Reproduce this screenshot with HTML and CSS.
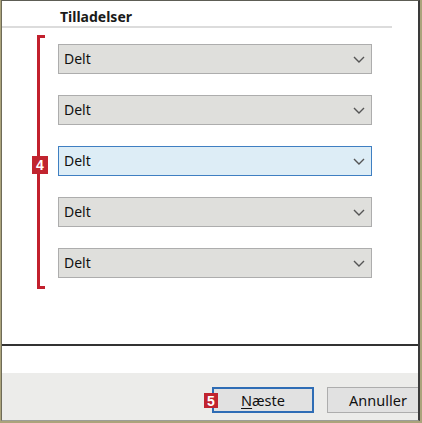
FILE: index.html
```html
<!DOCTYPE html>
<html lang="da">
<head>
<meta charset="utf-8">
<title>Tilladelser</title>
<link rel="stylesheet" href="styles.css">
</head>
<body>
<div class="window">
  <div class="panel">
    <div class="header">Tilladelser</div>
    <div class="annot">
      <div class="bracket"><span class="badge badge-4">4</span></div>
      <div class="list">
        <div class="select"><span>Delt</span><svg class="chev" width="12" height="7" viewBox="0 0 12 7"><polyline points="1,1 6,6 11,1" fill="none" stroke="#555" stroke-width="1.4"/></svg></div>
        <div class="select"><span>Delt</span><svg class="chev" width="12" height="7" viewBox="0 0 12 7"><polyline points="1,1 6,6 11,1" fill="none" stroke="#555" stroke-width="1.4"/></svg></div>
        <div class="select focus"><span>Delt</span><svg class="chev" width="12" height="7" viewBox="0 0 12 7"><polyline points="1,1 6,6 11,1" fill="none" stroke="#555" stroke-width="1.4"/></svg></div>
        <div class="select"><span>Delt</span><svg class="chev" width="12" height="7" viewBox="0 0 12 7"><polyline points="1,1 6,6 11,1" fill="none" stroke="#555" stroke-width="1.4"/></svg></div>
        <div class="select"><span>Delt</span><svg class="chev" width="12" height="7" viewBox="0 0 12 7"><polyline points="1,1 6,6 11,1" fill="none" stroke="#555" stroke-width="1.4"/></svg></div>
      </div>
    </div>
  </div>
  <div class="strip"></div>
  <div class="footer">
    <div class="btn primary"><span class="badge badge-5">5</span><span><u>N</u>æste</span></div>
    <div class="btn">Annuller</div>
  </div>
</div>
</body>
</html>
```
FILE: styles.css
```css
html, body {
  margin: 0;
  padding: 0;
}
body {
  background: #aba37b;
  width: 422px;
  height: 423px;
  overflow: hidden;
  font-family: "Noto Sans", "Open Sans", sans-serif;
  color: #111;
}
.window {
  margin-left: 1px;
  width: 419px;
  height: 421px;
  box-sizing: border-box;
  border-left: 1px solid #6e6b58;
  border-top: 1px solid #5d5d55;
  border-right: 2px solid #3a3a3a;
  border-bottom: 1px solid #9d9d98;
  background: #fff;
  display: flex;
  flex-direction: column;
  overflow: hidden;
}
.panel {
  height: 345px;
  flex: none;
  box-sizing: border-box;
  border-bottom: 2px solid #333;
  background: #fff;
}
.header {
  width: 390px;
  height: 27px;
  box-sizing: border-box;
  padding: 7px 0 0 58px;
  font-weight: bold;
  font-size: 14px;
  line-height: 18px;
  border-bottom: 2px solid #dcdcdc;
  color: #1a1a1a;
}
.annot {
  display: flex;
  margin-top: 7px;
  margin-left: 35px;
}
.bracket {
  position: relative;
  width: 8px;
  height: 254px;
  box-sizing: border-box;
  border-left: 3px solid #c2202d;
  border-top: 3px solid #c2202d;
  border-bottom: 3px solid #c2202d;
  flex: none;
}
.badge {
  position: absolute;
  background: #c1242f;
  color: #fff;
  font-weight: bold;
  display: flex;
  align-items: center;
  justify-content: center;
  font-family: "Liberation Sans", Arial, sans-serif;
}
.badge-4 {
  left: -8px;
  top: 118px;
  width: 16px;
  height: 18px;
  font-size: 14px;
}
.list {
  margin-left: 13px;
  padding-top: 9px;
  display: flex;
  flex-direction: column;
  gap: 21px;
}
.select {
  width: 314px;
  height: 30px;
  box-sizing: border-box;
  border: 1px solid #adadad;
  background: #dfdfdc;
  display: flex;
  align-items: center;
  justify-content: space-between;
  padding: 0 5px 0 5px;
  font-size: 14px;
}
.select span {
  margin-top: -1px;
}
.select.focus {
  background: #ddedf6;
  border-color: #3f7fc2;
}
.chev {
  display: block;
  margin-right: 1px;
}
.strip {
  height: 27px;
  flex: none;
  background: #fff;
}
.footer {
  flex: 1;
  background: #ececea;
  display: flex;
  justify-content: flex-end;
  gap: 13px;
  padding-top: 14px;
  box-sizing: border-box;
  margin-right: -11px;
}
.btn {
  position: relative;
  width: 102px;
  height: 26px;
  box-sizing: border-box;
  border: 1px solid #adadad;
  background: #e1e1e1;
  display: flex;
  align-items: center;
  justify-content: center;
  font-size: 14.5px;
  color: #111;
  flex: none;
}
.btn.primary {
  border: 2px solid #2f6db5;
}
.btn u {
  text-decoration-thickness: 1px;
  text-underline-offset: 2px;
}
.badge-5 {
  left: -10px;
  top: 4px;
  width: 14px;
  height: 15px;
  font-size: 14px;
}
```
